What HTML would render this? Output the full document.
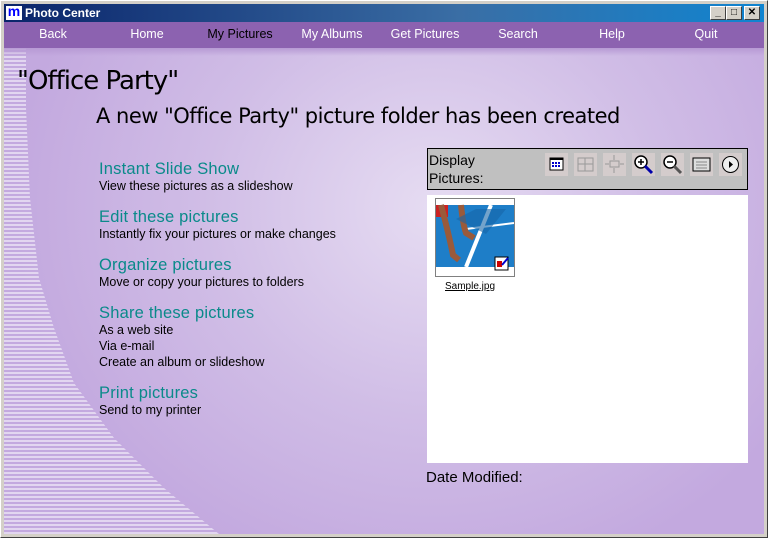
<!DOCTYPE html>
<html><head><style>
*{margin:0;padding:0;box-sizing:border-box}
body{width:768px;height:538px;background:#d4d0c8;font-family:"Liberation Sans",sans-serif;position:relative;overflow:hidden}
.win{position:absolute;left:0;top:0;width:768px;height:538px;border:1px solid #fff;border-right-color:#404040;border-bottom-color:#404040}
.title{position:absolute;left:4px;top:4px;width:760px;height:18px;background:linear-gradient(90deg,#0a246a,#3a6ea5 60%,#1084d0);color:#fff;font-weight:bold;font-size:12px;line-height:18px}
.logo{position:absolute;left:2px;top:2px;width:16px;height:14px;background:#fff;color:#00f;font-size:14px;line-height:11px;text-align:center;font-weight:bold}
.tb{position:absolute;top:2px;width:16px;height:14px;background:#d4d0c8;border:1px solid #fff;border-right-color:#404040;border-bottom-color:#404040;color:#000;font-size:10px;line-height:12px;text-align:center}
.nav{position:absolute;left:4px;top:22px;width:760px;height:26px;background:#8c62b0}
.nav span{position:absolute;top:5px;font-size:12.5px;color:#fff;transform:translateX(-50%)}
.content{position:absolute;left:4px;top:48px;width:760px;height:486px;background:radial-gradient(ellipse 420px 380px at 430px 160px,#e6dcf2 0%,#d0bde6 55%,#c3a9df 100%);overflow:hidden}
.stripes{position:absolute;left:0;top:0;width:220px;height:486px;background:repeating-linear-gradient(180deg,#e2d6f0 0 2px,transparent 2px 4px);clip-path:polygon(0 0,22px 0,22px 60px,26px 150px,35px 230px,50px 280px,70px 335px,110px 390px,160px 440px,215px 486px,0 486px)}
.shade{position:absolute;left:0;top:0;width:760px;height:8px;background:linear-gradient(#b79ad4,transparent)}
h1{position:absolute;left:13px;top:18px;font-size:26px;font-weight:normal;color:#000;font-family:"DejaVu Sans",sans-serif;letter-spacing:-1px}
h2{position:absolute;left:92px;top:56px;font-size:21px;font-weight:normal;color:#000;font-family:"DejaVu Sans",sans-serif;letter-spacing:-0.5px}
.lk{position:absolute;left:95px;font-size:12.5px;color:#000;line-height:16px}
.lk b{display:block;color:#0a8a8a;font-size:16.5px;font-weight:normal;line-height:18px;letter-spacing:.2px}
.bar{position:absolute;left:423px;top:100px;width:321px;height:42px;background:#c0c0c0;border:1px solid #000;font-size:14px;line-height:18px;padding:2px 0 0 1px}
.ic{position:absolute;top:4px;width:23px;height:23px;background:#d4cccc}
.panel{position:absolute;left:423px;top:147px;width:321px;height:268px;background:#fff}
.thumb{position:absolute;left:8px;top:3px;width:80px;height:79px;border:1px solid #808080;background:#fff}
.cap{position:absolute;left:18px;top:86px;font-size:10px;text-decoration:underline}
.dm{position:absolute;left:422px;top:421px;font-size:15px}
</style></head><body>
<div class="win"></div>
<div class="title"><div class="logo">m</div><span style="position:absolute;left:21px">Photo Center</span>
<div class="tb" style="left:706px">_</div><div class="tb" style="left:722px">□</div><div class="tb" style="left:740px">✕</div></div>
<div class="nav">
<span style="left:49px">Back</span><span style="left:143px">Home</span><span style="left:236px;color:#000">My Pictures</span><span style="left:328px">My Albums</span><span style="left:421px">Get Pictures</span><span style="left:514px">Search</span><span style="left:608px">Help</span><span style="left:702px">Quit</span></div>
<div class="content">
<div class="stripes"></div><div class="shade"></div>
<h1>"Office Party"</h1>
<h2>A new "Office Party" picture folder has been created</h2>
<div class="lk" style="top:112px"><b>Instant Slide Show</b>View these pictures as a slideshow</div>
<div class="lk" style="top:160px"><b>Edit these pictures</b>Instantly fix your pictures or make changes</div>
<div class="lk" style="top:208px"><b>Organize pictures</b>Move or copy your pictures to folders</div>
<div class="lk" style="top:256px"><b>Share these pictures</b>As a web site<br>Via e-mail<br>Create an album or slideshow</div>
<div class="lk" style="top:336px"><b>Print pictures</b>Send to my printer</div>
<div class="bar">Display<br>Pictures:
<div class="ic" style="left:117px"><svg width="23" height="23"><rect x="5" y="5" width="13" height="12" fill="#fff" stroke="#000"/><rect x="5" y="5" width="13" height="2" fill="#000"/><g fill="#00c"><rect x="7" y="9" width="2" height="2"/><rect x="10" y="9" width="2" height="2"/><rect x="13" y="9" width="2" height="2"/><rect x="7" y="12" width="2" height="2"/><rect x="10" y="12" width="2" height="2"/><rect x="13" y="12" width="2" height="2"/></g></svg></div>
<div class="ic" style="left:146px"><svg width="23" height="23"><rect x="4" y="5" width="15" height="13" fill="none" stroke="#999"/><path d="M11 5v13M4 11h15" stroke="#999"/></svg></div>
<div class="ic" style="left:175px"><svg width="23" height="23"><rect x="7" y="8" width="9" height="6" fill="none" stroke="#999"/><path d="M11 2v5M11 15v5M2 11h4M17 11h4" stroke="#999"/></svg></div>
<div class="ic" style="left:204px"><svg width="23" height="23"><circle cx="9" cy="9" r="6" fill="#fff" stroke="#000" stroke-width="1.5"/><path d="M6 9h6M9 6v6" stroke="#000" stroke-width="1.5"/><path d="M13 13l7 7" stroke="#00a" stroke-width="3"/></svg></div>
<div class="ic" style="left:233px"><svg width="23" height="23"><circle cx="9" cy="9" r="6" fill="#fff" stroke="#000" stroke-width="1.5"/><path d="M6 9h6" stroke="#000" stroke-width="1.5"/><path d="M13 13l7 7" stroke="#555" stroke-width="3"/></svg></div>
<div class="ic" style="left:262px"><svg width="23" height="23"><rect x="3" y="5" width="17" height="13" fill="#ddd" stroke="#000"/><path d="M6 9h11M6 12h11M6 15h11" stroke="#888"/></svg></div>
<div class="ic" style="left:291px"><svg width="23" height="23"><circle cx="11.5" cy="11.5" r="8" fill="#eee" stroke="#000"/><path d="M10 8l4 3.5-4 3.5z" fill="#000"/></svg></div>
</div>
<div class="panel">
<div class="thumb"><svg width="78" height="77"><rect x="0" y="6" width="78" height="62" fill="#1e7ec8"/><rect x="0" y="6" width="12" height="12" fill="#c22"/><path d="M55 6L30 68" stroke="#fff" stroke-width="4"/><path d="M30 30l48-6" stroke="#fff" stroke-width="2"/><path d="M5 6q8 30 12 50l6 5M25 6q2 20 5 28l8 5" stroke="#9a5a3a" stroke-width="6" fill="none"/><path d="M20 20l20-10 30 0-20 25z" fill="#1565a8" opacity=".6"/><rect x="59" y="58" width="13" height="13" fill="#fff" stroke="#000"/><rect x="61" y="62" width="5" height="6" fill="#c00"/><path d="M66 66l6-7" stroke="#00c" stroke-width="2"/></svg></div>
<div class="cap">Sample.jpg</div>
</div>
<div class="dm">Date Modified:</div>
</div>
</body></html>
